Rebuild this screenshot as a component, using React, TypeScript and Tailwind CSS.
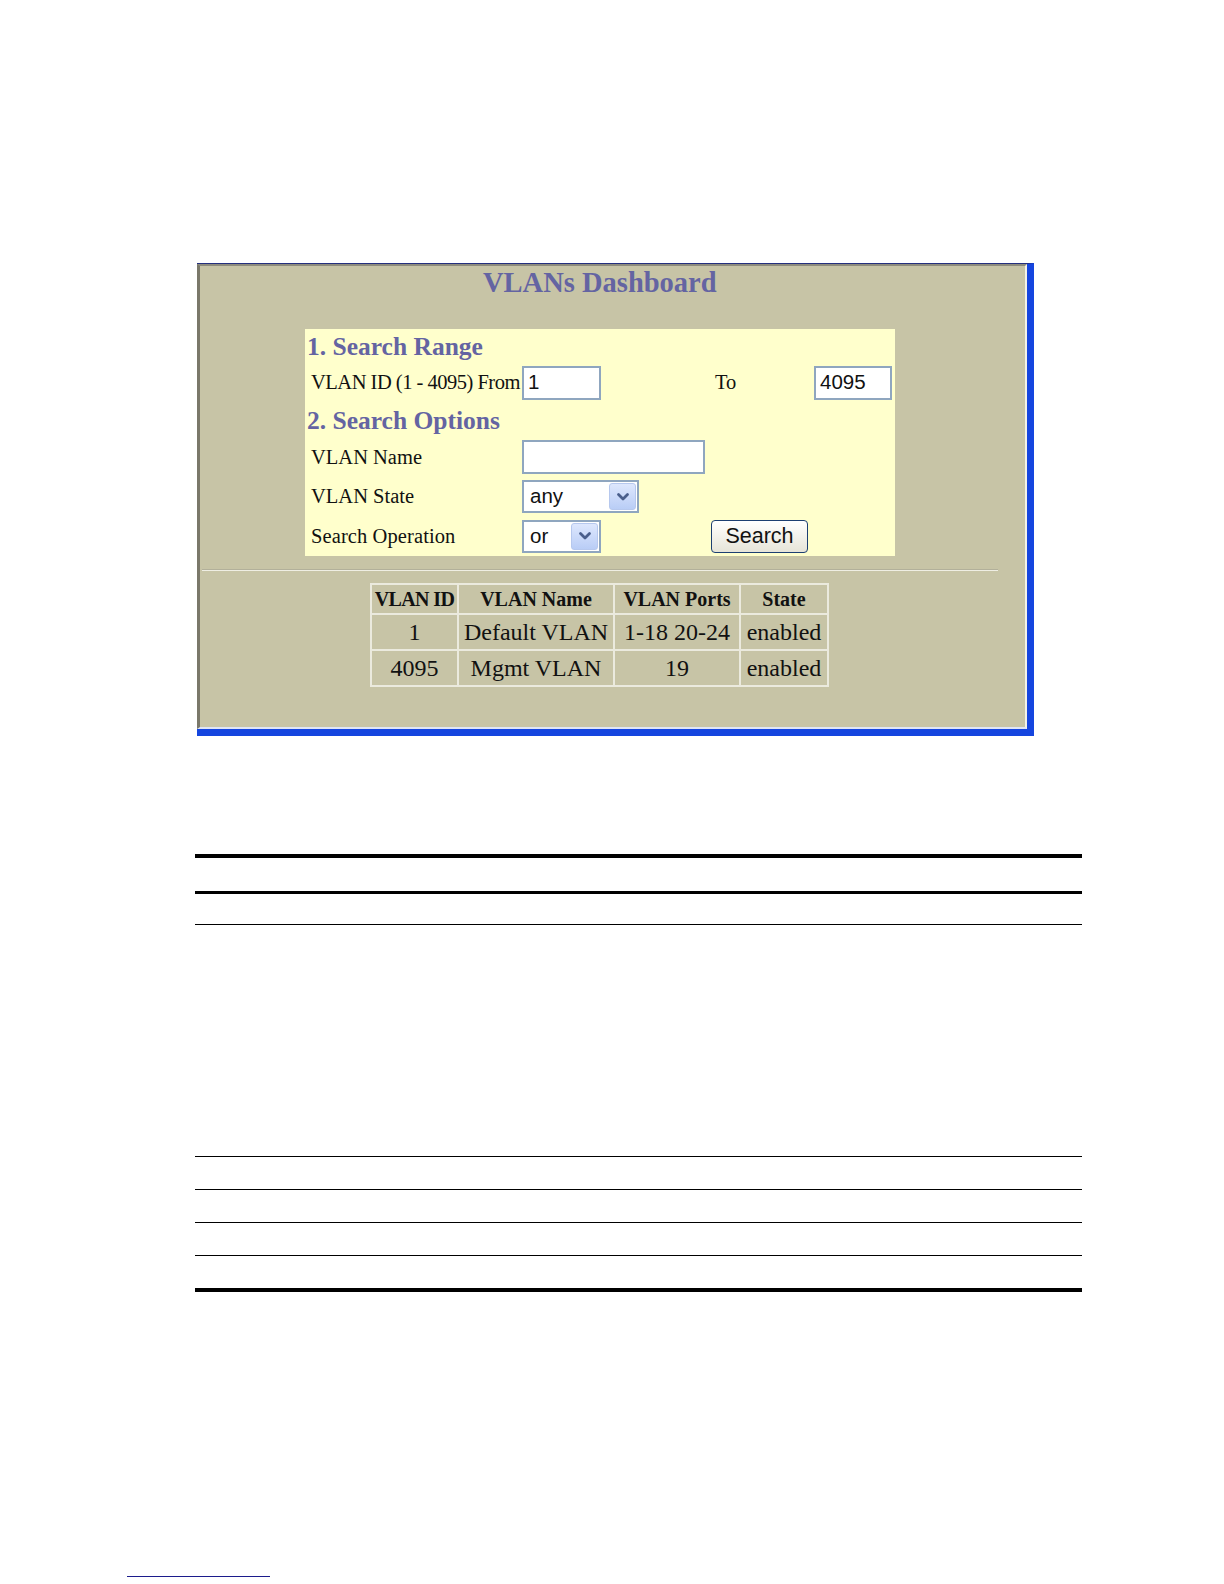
import React from "react";

const serif = { fontFamily: '"Liberation Serif", "Times New Roman", serif' };
const sans = { fontFamily: '"Liberation Sans", Arial, sans-serif' };

function Chevron() {
  return (
    <svg width="14" height="10" viewBox="0 0 14 10">
      <path d="M2.5 2.5 L7 7 L11.5 2.5" fill="none" stroke="#4a5f8c" strokeWidth="2.8" strokeLinecap="round" strokeLinejoin="round" />
    </svg>
  );
}

function TextBox({ w, value }: { w: string; value?: string }) {
  return (
    <div
      className={`${w} h-[34px] border-2 border-[#8fa6bf] bg-white flex items-center pl-[4px] text-[20.5px] text-[#111]`}
      style={sans}
    >
      {value}
    </div>
  );
}

function SelectBox({ w, value }: { w: string; value: string }) {
  return (
    <div
      className={`${w} h-[33px] border-2 border-[#8fa6bf] bg-white flex items-center justify-between pl-[6px] pr-[1px] text-[20.5px] text-[#111]`}
      style={sans}
    >
      <span>{value}</span>
      <div className="w-[27px] h-[27px] rounded-[3px] border border-[#b6c8ee] bg-gradient-to-b from-[#dde7fd] to-[#b9cdf6] flex items-center justify-center">
        <Chevron />
      </div>
    </div>
  );
}

export default function App() {
  return (
    <div className="w-full h-[1584px] overflow-hidden bg-white pt-[263px]" style={serif}>
      {/* screenshot frame */}
      <div className="ml-[197px] w-[837px] border-t border-t-[#24307e] border-r-[7px] border-r-[#1545df] border-b-[7px] border-b-[#1545df] bg-[#c7c4a6]">
        <div className="h-[465px] border-l-[3px] border-l-[#7a786a] border-t-2 border-t-[#8d8b7c] border-r-2 border-r-[#f3f2e8] border-b-2 border-b-[#dfe5f5] flex flex-col">
          <div className="mt-[1px] h-[32px] leading-[32px] pl-[283px] text-[28.5px] font-bold text-[#6464a2] whitespace-nowrap">
            VLANs Dashboard
          </div>

          {/* search panel */}
          <div className="ml-[105px] mt-[30px] w-[590px] h-[227px] bg-[#ffffcc] flex flex-col text-[20.5px] text-[#111]">
            <div className="h-[35px] leading-[35px] pl-[2px] text-[25.5px] font-bold text-[#6464a2] whitespace-nowrap">
              1. Search Range
            </div>
            <div className="h-[37px] flex items-center">
              <div className="w-[217px] pl-[6px] whitespace-nowrap tracking-[-0.5px]">VLAN ID (1 - 4095) From</div>
              <div className="w-[193px]">
                <TextBox w="w-[79px]" value="1" />
              </div>
              <div className="w-[99px]">To</div>
              <TextBox w="w-[78px]" value="4095" />
            </div>
            <div className="h-[39px] leading-[39px] pl-[2px] text-[25.5px] font-bold text-[#6464a2] whitespace-nowrap">
              2. Search Options
            </div>
            <div className="h-[34px] flex items-center">
              <div className="w-[217px] pl-[6px] whitespace-nowrap">VLAN Name</div>
              <TextBox w="w-[183px]" />
            </div>
            <div className="h-[45px] flex items-center">
              <div className="w-[217px] pl-[6px] whitespace-nowrap">VLAN State</div>
              <SelectBox w="w-[117px]" value="any" />
            </div>
            <div className="h-[34px] flex items-center">
              <div className="w-[217px] pl-[6px] whitespace-nowrap tracking-[0.1px]">Search Operation</div>
              <SelectBox w="w-[79px]" value="or" />
              <button
                className="ml-[110px] w-[97px] h-[33px] rounded-[4px] border border-[#1c3f72] bg-gradient-to-b from-[#ffffff] to-[#e6e4d8] text-[21.5px] text-[#111] flex items-center justify-center"
                style={sans}
              >
                Search
              </button>
            </div>
          </div>

          <div className="ml-[2px] mt-[13px] w-[796px] border-t border-t-[#b2b09a] border-b border-b-[#efeee3]" />

          {/* results table */}
          <div className="ml-[170px] mt-[12px]">
            <table className="table-fixed border-collapse w-[457px] text-[#111]">
              <colgroup>
                <col className="w-[87px]" />
                <col className="w-[156px]" />
                <col className="w-[126px]" />
                <col className="w-[88px]" />
              </colgroup>
              <thead>
                <tr className="h-[30px] text-[20px] leading-[22px] font-bold">
                  <th className="border-2 border-[#ebeade] p-0 whitespace-nowrap tracking-[-0.6px]">VLAN ID</th>
                  <th className="border-2 border-[#ebeade] p-0 whitespace-nowrap">VLAN Name</th>
                  <th className="border-2 border-[#ebeade] p-0 whitespace-nowrap">VLAN Ports</th>
                  <th className="border-2 border-[#ebeade] p-0 whitespace-nowrap">State</th>
                </tr>
              </thead>
              <tbody className="text-[24px] leading-[28px]">
                <tr className="h-[36px]">
                  <td className="border-2 border-[#ebeade] p-0 text-center">1</td>
                  <td className="border-2 border-[#ebeade] p-0 text-center whitespace-nowrap">Default VLAN</td>
                  <td className="border-2 border-[#ebeade] p-0 text-center whitespace-nowrap">1-18 20-24</td>
                  <td className="border-2 border-[#ebeade] p-0 text-center">enabled</td>
                </tr>
                <tr className="h-[36px]">
                  <td className="border-2 border-[#ebeade] p-0 text-center">4095</td>
                  <td className="border-2 border-[#ebeade] p-0 text-center whitespace-nowrap">Mgmt VLAN</td>
                  <td className="border-2 border-[#ebeade] p-0 text-center">19</td>
                  <td className="border-2 border-[#ebeade] p-0 text-center">enabled</td>
                </tr>
              </tbody>
            </table>
          </div>
        </div>
      </div>

      {/* document table rules */}
      <div className="ml-[195px] w-[887px] flex flex-col">
        <div className="mt-[118px] h-[4px] bg-black" />
        <div className="mt-[33px] h-[3px] bg-black" />
        <div className="mt-[30px] h-[1px] bg-black" />
        <div className="mt-[231px] h-[1px] bg-black" />
        <div className="mt-[32px] h-[1px] bg-black" />
        <div className="mt-[32px] h-[1px] bg-black" />
        <div className="mt-[32px] h-[1px] bg-black" />
        <div className="mt-[32px] h-[4px] bg-black" />
      </div>

      <div className="ml-[127px] mt-[284px] w-[143px] h-[1px] bg-[#1c1c8c]" />
    </div>
  );
}
